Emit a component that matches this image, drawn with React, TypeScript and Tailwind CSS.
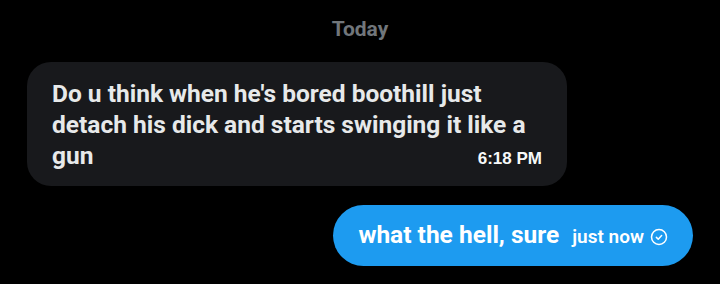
const ROBOTO = "font-['Roboto',sans-serif]"

export default function App() {
  return (
    <div className={`w-[720px] h-[284px] bg-black px-[27px] ${ROBOTO}`}>
      <div className="pt-[15px] text-center text-[21px] leading-[28px] font-bold text-[#71767b]">Today</div>

      <div className="mt-[19px] w-[540px] rounded-[24px] bg-[#18191c] pl-[25px] pr-[25px] pt-[16px] pb-[15px] text-[24.5px] leading-[31px] font-bold text-[#e7e9ea]">
        Do u think when he's bored boothill just detach his dick and starts swinging it like a gun
        <span className="float-right mt-[3px] ml-3 font-['Liberation_Sans',sans-serif] text-[17px] leading-[31px] font-bold text-[#f7f9f9]">6:18 PM</span>
      </div>

      <div className="mt-[19px] flex justify-end">
        <div className="h-[61px] flex items-center rounded-full bg-[#1d9bf0] pl-[25px] pr-[25px] text-white">
          <span className="text-[24.5px] font-bold">what the hell, sure</span>
          <span className="ml-[13px] pt-[3px] text-[19px] font-semibold">just now</span>
          <svg className="ml-[6px] mt-[3px]" width="18" height="18" viewBox="0 0 24 24" fill="none" stroke="currentColor" strokeWidth="2" strokeLinecap="round" strokeLinejoin="round">
            <circle cx="12" cy="12" r="10" />
            <path d="m8.5 12.5 2.5 2.5 4.5-5" />
          </svg>
        </div>
      </div>
    </div>
  )
}
